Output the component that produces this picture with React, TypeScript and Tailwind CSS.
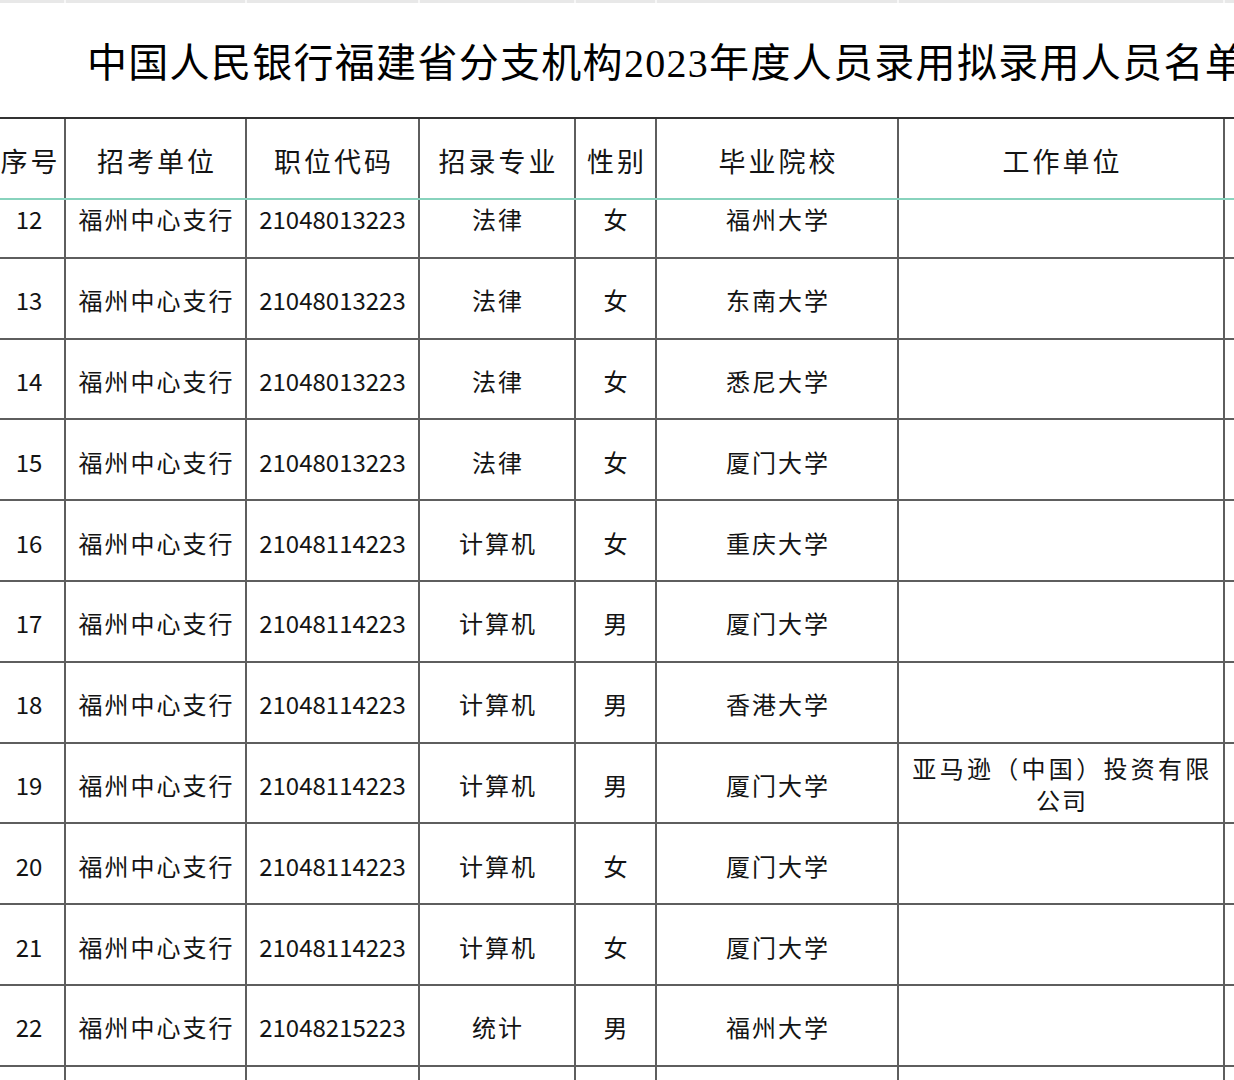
const cols = 'grid grid-cols-[72px_181px_173px_156px_81px_242px_326px_200px]'

const rows = [
  { no: '12', unit: '福州中心支行', code: '21048013223', major: '法律', sex: '女', school: '福州大学', work: '' },
  { no: '13', unit: '福州中心支行', code: '21048013223', major: '法律', sex: '女', school: '东南大学', work: '' },
  { no: '14', unit: '福州中心支行', code: '21048013223', major: '法律', sex: '女', school: '悉尼大学', work: '' },
  { no: '15', unit: '福州中心支行', code: '21048013223', major: '法律', sex: '女', school: '厦门大学', work: '' },
  { no: '16', unit: '福州中心支行', code: '21048114223', major: '计算机', sex: '女', school: '重庆大学', work: '' },
  { no: '17', unit: '福州中心支行', code: '21048114223', major: '计算机', sex: '男', school: '厦门大学', work: '' },
  { no: '18', unit: '福州中心支行', code: '21048114223', major: '计算机', sex: '男', school: '香港大学', work: '' },
  { no: '19', unit: '福州中心支行', code: '21048114223', major: '计算机', sex: '男', school: '厦门大学', work: 'amazon' },
  { no: '20', unit: '福州中心支行', code: '21048114223', major: '计算机', sex: '女', school: '厦门大学', work: '' },
  { no: '21', unit: '福州中心支行', code: '21048114223', major: '计算机', sex: '女', school: '厦门大学', work: '' },
  { no: '22', unit: '福州中心支行', code: '21048215223', major: '统计', sex: '男', school: '福州大学', work: '' },
  { no: '', unit: '', code: '', major: '', sex: '', school: '', work: '' },
]

const headers = ['序号', '招考单位', '职位代码', '招录专业', '性别', '毕业院校', '工作单位', '']

function Cell({ children, cjk }: { children?: React.ReactNode; cjk?: boolean }) {
  return (
    <div
      className={
        'flex items-center justify-center border-r-2 border-[#5e5e5e] pt-[4px] text-center leading-[32px] ' +
        (cjk ? 'tracking-[2px] pl-[2px]' : '')
      }
    >
      {children}
    </div>
  )
}

export default function App() {
  return (
    <div
      className="h-[1080px] w-[1234px] overflow-hidden bg-white text-[#141414]"
      style={{ fontFamily: '"Noto Sans CJK SC", "Noto Sans", sans-serif' }}
    >
      <div className="-ml-[6px] w-[1440px]">
        {/* sheet top strip */}
        <div className={cols + ' h-[3px] bg-[#e8e8e8]'}>
          {headers.map((_, i) => (
            <div key={i} className="border-r-2 border-[#f7f7f7]" />
          ))}
        </div>

        {/* title */}
        <div className="flex h-[114px] items-center pl-[93px] pt-[7px]">
          <h1
            className="whitespace-nowrap text-[40px] font-normal tracking-[1.3px] text-black"
            style={{ fontFamily: '"Liberation Serif", "DejaVu Serif", "Noto Sans CJK SC", serif' }}
          >
            中国人民银行福建省分支机构<span style={{ fontFamily: '"Liberation Serif", serif' }}>2023</span>
            年度人员录用拟录用人员名单
          </h1>
        </div>

        {/* header */}
        <div className={cols + ' h-[81px] border-t-2 border-[#333333] text-[27px]'}>
          {headers.map((h, i) => (
            <div
              key={i}
              className="flex items-center justify-center border-r-2 border-[#5e5e5e] pl-[3px] pt-[6px] tracking-[3px]"
            >
              {h}
            </div>
          ))}
        </div>
        <div className="h-[2px] bg-[#88d3bd]" />

        {/* body, scrolled under the frozen header */}
        <div className="h-[900px] overflow-hidden">
          <div className="-mt-[22px]">
            {rows.map((r, i) => (
              <div key={i} className={cols + ' h-[80.8px] border-b-2 border-[#5e5e5e] text-[24px]'}>
                <Cell>{r.no}</Cell>
                <Cell cjk>{r.unit}</Cell>
                <Cell>{r.code}</Cell>
                <Cell cjk>{r.major}</Cell>
                <Cell cjk>{r.sex}</Cell>
                <Cell cjk>{r.school}</Cell>
                {r.work === 'amazon' ? (
                  <div className="flex flex-col items-center justify-center border-r-2 border-[#5e5e5e] pt-[2px] text-center leading-[32px]">
                    <span className="pl-[3px] tracking-[3.3px]">亚马逊（中国）投资有限</span>
                    <span className="pl-[2px] tracking-[2px]">公司</span>
                  </div>
                ) : (
                  <Cell />
                )}
                <Cell />
              </div>
            ))}
          </div>
        </div>
      </div>
    </div>
  )
}
